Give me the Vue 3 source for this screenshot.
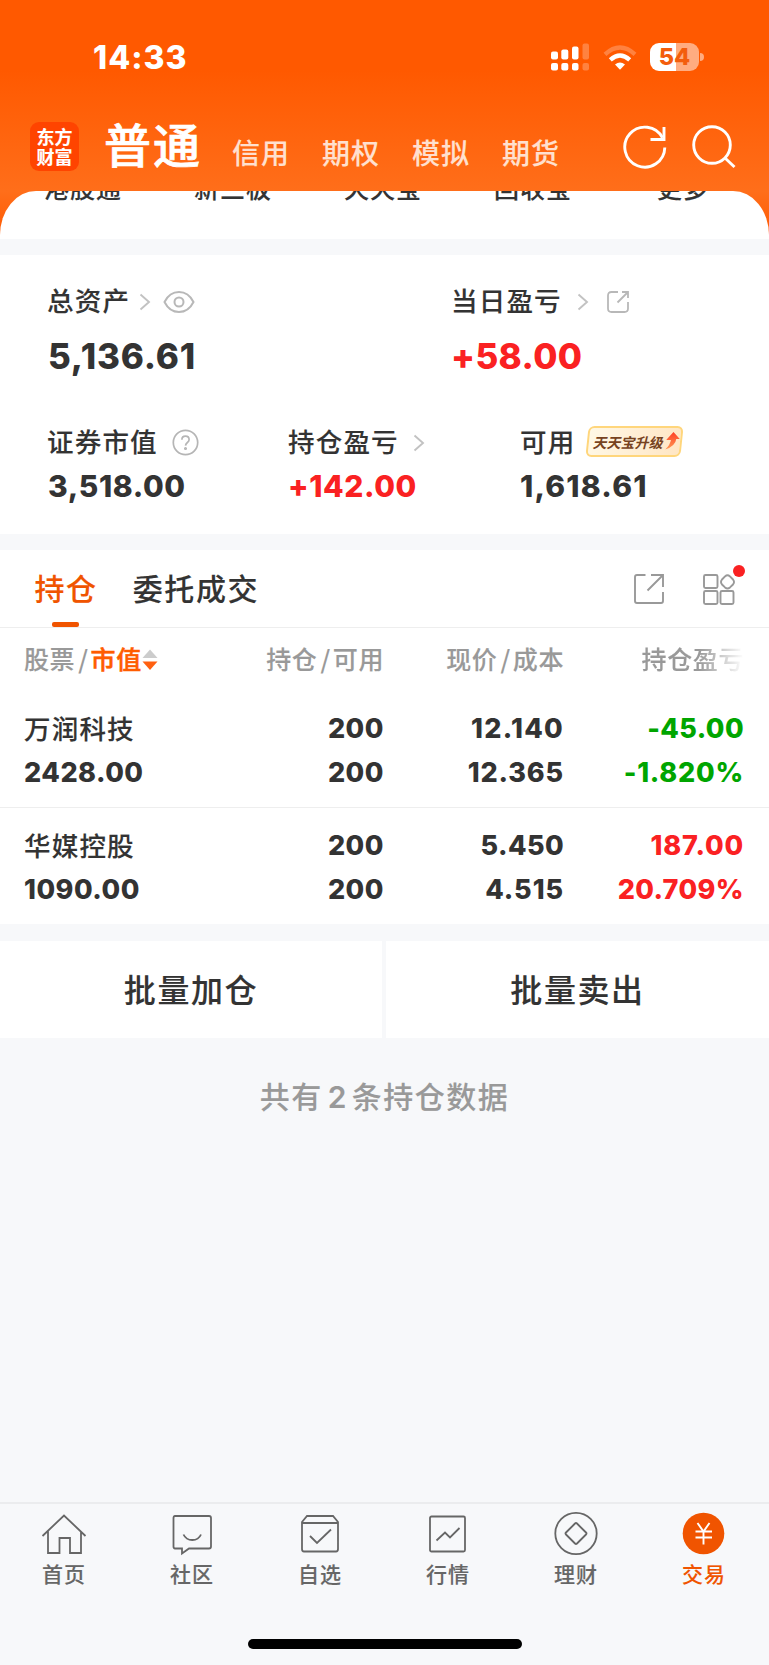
<script setup>
const markets = ['信用', '期权', '模拟', '期货']
const shortcuts = ['港股通', '新三板', '天天宝', '回收宝', '更多']
const holdings = [
  { name: '万润科技', value: '2428.00', held: '200', usable: '200', price: '12.140', cost: '12.365', profit: '-45.00', rate: '-1.820%', tone: 'down' },
  { name: '华媒控股', value: '1090.00', held: '200', usable: '200', price: '5.450', cost: '4.515', profit: '187.00', rate: '20.709%', tone: 'up' },
]
const tabs = [
  { id: 'home', label: '首页' },
  { id: 'community', label: '社区' },
  { id: 'watch', label: '自选' },
  { id: 'market', label: '行情' },
  { id: 'wealth', label: '理财' },
  { id: 'trade', label: '交易' },
]
// The digit 1 is narrow, so figures containing it are tracked a little wider.
function tracking(text) {
  const ones = text.split('1').length - 1
  return { letterSpacing: `${0.4 + (2.6 * ones) / text.length}px` }
}
</script>

<template>
  <div class="app">
    <header class="top">
      <div class="status">
        <span class="time num">14:33</span>
        <svg class="signal" width="39" height="28" viewBox="0 0 39 28">
          <g fill="#fff">
            <rect x="0" y="8.500" width="7" height="8" rx="2" /><rect x="10.300" y="6.500" width="7" height="10" rx="2" /><rect x="21" y="3.500" width="6.500" height="13" rx="2" />
            <rect x="0" y="20" width="7" height="7.500" rx="2" /><rect x="10.300" y="20" width="7" height="7.500" rx="2" /><rect x="21" y="20" width="6.500" height="7.500" rx="2" />
          </g>
          <g fill="#ff8240"><rect x="31.500" y="0.500" width="6.500" height="16" rx="2" /><rect x="31.500" y="20" width="6.500" height="7.500" rx="2" /></g>
        </svg>
        <svg class="wifi" width="34" height="26" viewBox="0 0 34 26" fill="none">
          <path d="M2 9.300Q17 -4.300 32 9.300" stroke="#ff8240" stroke-width="4.300" />
          <path d="M7.300 14.800Q17 6.200 26.700 14.800" stroke="#fff" stroke-width="4.400" />
          <path d="M12 19.600Q17 15.400 22 19.600L17 24.700Z" fill="#fff" />
        </svg>
        <div class="battery num"><span>54</span></div>
        <i class="nub"></i>
      </div>
      <nav class="nav">
        <div class="logo"><span>东方</span><span>财富</span></div>
        <h1>普通</h1>
        <span v-for="m in markets" :key="m" class="market">{{ m }}</span>
        <svg class="refresh" width="46" height="46" viewBox="0 0 46 46" fill="none" stroke="#fff" stroke-width="2.900">
          <path d="M42.800 23.500A20 20 0 1 1 40.500 13.800" /><path d="M42 3V15.500H28.500" />
        </svg>
        <svg class="search" width="46" height="46" viewBox="0 0 46 46" fill="none" stroke="#fff" stroke-width="2.900">
          <circle cx="21" cy="21" r="18.300" /><path d="M34 34L43.500 43" />
        </svg>
      </nav>
    </header>
    <section class="shortcuts"><div><span v-for="s in shortcuts" :key="s">{{ s }}</span></div></section>

    <section class="summary">
      <div class="pair">
        <div class="stat">
          <div class="label">总资产
            <svg class="chev c1" width="12" height="18" viewBox="0 0 12 18"><path d="M1.500 1.500L10 9L1.500 16.500" /></svg>
            <svg class="eye" width="32" height="24" viewBox="0 0 32 24" fill="none" stroke="#b8b8b8" stroke-width="2"><path d="M1.500 12C5 5 10 2 16 2S27 5 30.500 12C27 19 22 22 16 22S5 19 1.500 12Z" /><circle cx="16" cy="12" r="4.500" /></svg>
          </div>
          <div class="num big">5,136.61</div>
        </div>
        <div class="stat">
          <div class="label">当日盈亏
            <svg class="chev c2" width="12" height="18" viewBox="0 0 12 18"><path d="M1.500 1.500L10 9L1.500 16.500" /></svg>
            <svg class="share" width="24" height="24" viewBox="0 0 24 24" fill="none" stroke="#b8b8b8" stroke-width="1.800"><path d="M12 2H5.500Q2 2 2 5.500V18.500Q2 22 5.500 22H18.500Q22 22 22 18.500V12M16 2H22V8M22 2L11.500 12.500" /></svg>
          </div>
          <div class="num big up">+58.00</div>
        </div>
      </div>
      <div class="triple">
        <div class="stat">
          <div class="label">证券市值
            <svg class="help" width="27" height="27" viewBox="0 0 27 27" fill="none" stroke="#b5b5b5" stroke-width="1.700"><circle cx="13.500" cy="13.500" r="12.200" /><path d="M9.900 10.800Q9.900 7.200 13.500 7.200T17.100 10.600Q17.100 12.200 15.400 13.500T13.500 16.600" /><circle cx="13.500" cy="19.500" r=".7" /></svg>
          </div>
          <div class="num mid">3,518.00</div>
        </div>
        <div class="stat">
          <div class="label">持仓盈亏
            <svg class="chev c3" width="12" height="18" viewBox="0 0 12 18"><path d="M1.500 1.500L10 9L1.500 16.500" /></svg>
          </div>
          <div class="num mid up">+142.00</div>
        </div>
        <div class="stat">
          <div class="label">可用
            <div class="badge">
              <span>天天宝升级</span>
              <svg width="14" height="18" viewBox="0 0 14 18"><defs><linearGradient id="arrowFill" x1="0" y1="0" x2="0" y2="1"><stop offset="0" stop-color="#ff3f25" /><stop offset="1" stop-color="#ff9a55" /></linearGradient></defs><path fill="url(#arrowFill)" d="M6.500 0L13.500 7H10Q10 14 0 17.500Q4.500 13 4.800 8H0Z" /></svg>
            </div>
          </div>
          <div class="num mid wide">1,618.61</div>
        </div>
      </div>
    </section>

    <section class="positions">
      <div class="tabs">
        <span class="tab active">持仓</span>
        <span class="tab">委托成交</span>
        <svg class="export" width="32" height="32" viewBox="0 0 32 32" fill="none" stroke="#999" stroke-width="1.900"><path d="M12.500 2H4Q2 2 2 4V28Q2 30 4 30H28Q30 30 30 28V19M18 2H30V14M30 2L14.500 17.500" /></svg>
        <div class="grid-icon">
          <svg width="34" height="34" viewBox="0 0 34 34" fill="none" stroke="#999" stroke-width="1.900"><rect x="2" y="2" width="13.500" height="13" rx="1.500" /><rect x="2" y="18" width="13.500" height="13" rx="1.500" /><rect x="18.500" y="18" width="13" height="13" rx="1.500" /><path d="M23 3.400Q25.500 1.300 28 3.400L31 6.500Q33 9 31 11.500L28 14.400Q25.500 16.500 23 14.400L20 11.500Q18 9 20 6.500Z" /></svg>
          <i></i>
        </div>
      </div>
      <div class="row thead">
        <div class="first">股票<b>/</b><em>市值</em><svg width="16" height="22" viewBox="0 0 16 22"><path d="M.500 9L8 .500L15.500 9Z" fill="#ccc" /><path d="M.500 12.500L8 21L15.500 12.500Z" fill="#ff6010" /></svg></div>
        <div>持仓<b>/</b>可用</div>
        <div>现价<b>/</b>成本</div>
        <div class="fade">持仓盈亏</div>
      </div>
      <div v-for="h in holdings" :key="h.name" class="row holding">
        <div class="first"><span class="name">{{ h.name }}</span><span class="num">{{ h.value }}</span></div>
        <div class="num"><span>{{ h.held }}</span><span>{{ h.usable }}</span></div>
        <div class="num"><span :style="tracking(h.price)">{{ h.price }}</span><span :style="tracking(h.cost)">{{ h.cost }}</span></div>
        <div class="num" :class="h.tone"><span :style="tracking(h.profit)">{{ h.profit }}</span><span :style="tracking(h.rate)">{{ h.rate }}</span></div>
      </div>
    </section>

    <section class="batch"><button>批量加仓</button><button>批量卖出</button></section>
    <p class="count">共有<span>2</span>条持仓数据</p>

    <footer class="tabbar">
      <div class="items">
        <div v-for="t in tabs" :key="t.id" class="item" :class="{ current: t.id === 'trade' }">
          <svg width="48" height="46" viewBox="0 0 48 46" fill="none" stroke="#666" stroke-width="1.800">
            <template v-if="t.id === 'home'"><path d="M2.500 25L24 4.500L45.500 25M8 20.500V42H19.500V27H30V42H41V20.500" /></template>
            <template v-else-if="t.id === 'community'"><path d="M7 5H41Q43 5 43 7V35.500Q43 37.500 41 37.500H21L14 42.500V37.500H7Q5.500 37.500 5.500 35.500V7Q5.500 5 7 5Z" /><path d="M15.500 23.500Q18 29 24.300 29T33 23.500" /></template>
            <template v-else-if="t.id === 'watch'"><path d="M6 11L11 5H37L42 11V38Q42 40.500 40 40.500H8Q6 40.500 6 38ZM6 12H42M14 25L21 32L35 18.500" /></template>
            <template v-else-if="t.id === 'market'"><rect x="6" y="5.500" width="35" height="35" rx="1.500" /><path d="M12.500 29.500L21 21.500L26 26.500L35.500 17" /></template>
            <template v-else-if="t.id === 'wealth'"><circle cx="24" cy="22.500" r="20.700" /><path d="M23 12.500Q24 11.500 25 12.500L34 21.500Q35 22.500 34 23.500L25 32.500Q24 33.500 23 32.500L14 23.500Q13 22.500 14 21.500Z" /></template>
            <template v-else><circle cx="23.500" cy="22.500" r="20.800" fill="#f05400" stroke="none" /><path stroke="#fff" stroke-width="1.900" d="M17.500 12L23.500 20.500L29.500 12M15.500 20.500H32M15.500 26.500H32M23.500 20V33.500" /></template>
          </svg>
          <span>{{ t.label }}</span>
        </div>
      </div>
      <i class="home-bar"></i>
    </footer>
  </div>
</template>

<style>
body { margin: 0; background: #f7f8fa; }
</style>

<style scoped>
* { box-sizing: border-box; }
.app { width: 769px; height: 1665px; display: flex; flex-direction: column; overflow: hidden; background: #f7f8fa; color: #333; font-family: "Noto Sans CJK SC", sans-serif; font-weight: 500; -webkit-text-stroke: .12px currentColor; }
i, em, b { font-style: normal; font-weight: inherit; }
svg { flex: none; display: block; }
.num { font-family: Inter, sans-serif; font-weight: 800; -webkit-text-stroke: 0; }
.up { color: #fa2122; }
.down { color: #00a500; }

.top { flex: none; height: 191px; background: linear-gradient(#ff5900 0, #ff5900 70px, #ff6e1a 191px); color: #fff; }
.status { height: 100px; display: flex; align-items: flex-start; padding-top: 43px; }
.time { width: 458px; padding-left: 93px; font-size: 32px; line-height: 30px; letter-spacing: 1px; }
.signal { margin-left: 93px; }
.wifi { margin: 2px 0 0 13px; }
.battery { width: 49px; height: 28px; margin-left: 13px; border-radius: 9px; background: linear-gradient(90deg, #fff 54%, #ffac80 54%); color: #f35d0c; font-size: 23.500px; line-height: 28px; text-align: center; }
.nub { width: 4px; height: 8px; margin: 10px 0 0 1px; border-radius: 0 4px 4px 0; background: #ffac80; }
.nav { height: 91px; display: flex; align-items: flex-start; padding-left: 30px; }
.logo { width: 49px; height: 49px; margin-top: 22px; padding-top: 4px; border-radius: 9px; background: #ff4400; font-size: 18px; font-weight: 700; line-height: 20px; text-align: center; }
.logo span { display: block; }
h1 { width: 127px; margin: 16px 0 0; padding-left: 25px; font-size: 47px; line-height: 54px; letter-spacing: 2px; font-weight: 500; -webkit-text-stroke-width: .7px; white-space: nowrap; }
.market { width: 90px; margin-top: 35px; font-size: 28px; line-height: 34px; letter-spacing: 1px; color: #ffe0cf; white-space: nowrap; }
h1 + .market { margin-left: 26px; }
.refresh { margin: 24px 0 0 30px; }
.search { margin: 24px 0 0 23px; }

.shortcuts { flex: none; height: 48px; background: linear-gradient(#ff6e1a, #ff5900); }
.shortcuts div { height: 48px; display: grid; grid-template-columns: repeat(5, 150px); padding-left: 8px; border-radius: 36px 36px 0 0 / 44px 44px 0 0; background: #fff; overflow: hidden; }
.shortcuts span { margin-top: -23px; font-size: 25px; line-height: 38px; letter-spacing: 1px; text-align: center; }

.summary { flex: none; height: 279px; margin-top: 16px; padding: 27px 47px 0; background: #fff; }
.pair { height: 141px; display: grid; grid-template-columns: 404px 1fr; }
.triple { display: grid; grid-template-columns: 241px 232px 1fr; padding-left: 0; }
.label { display: flex; align-items: center; height: 36px; font-size: 26.500px; letter-spacing: 1.200px; line-height: 36px; white-space: nowrap; }
.chev { margin-top: 3px; fill: none; stroke: #c2c2c2; stroke-width: 1.900; }
.c1 { margin-left: 9px; }
.c2 { margin-left: 15px; }
.c3 { margin-left: 14px; }
.eye { margin: 3px 0 0 12px; }
.share { margin: 3px 0 0 17px; }
.help { margin: 3px 0 0 14px; }
.big { margin-top: 18px; padding-left: 1px; font-size: 35px; line-height: 40px; letter-spacing: .800px; }
.big.up { padding-left: 0; letter-spacing: .400px; }
.mid { margin-top: 9px; padding-left: 1px; font-size: 30px; line-height: 36px; letter-spacing: .600px; }
.mid.up { padding-left: 0; }
.mid.wide { padding-left: 0; letter-spacing: 1.200px; }
.badge { width: 95px; height: 31px; margin: 0 0 0 12px; padding-left: 5px; display: flex; align-items: center; border: 2px solid #ffd67c; border-radius: 6px; transform: skewX(-6deg); background: linear-gradient(100deg, #fff8e6, #ffe6c4); color: #77431f; font-size: 14px; font-weight: 700; letter-spacing: 0; -webkit-text-stroke: 0; }
.badge span { transform: skewX(-8deg); }
.badge svg { margin: -2px 0 0 2px; }

.positions { flex: none; height: 374px; margin-top: 16px; background: #fff; }
.tabs { display: flex; height: 78px; padding-left: 34.500px; border-bottom: 1px solid #eee; }
.tab { position: relative; margin-right: 35px; padding-top: 18px; font-size: 30px; line-height: 38px; letter-spacing: 1.600px; }
.active { color: #f05400; }
.active::after { content: ""; position: absolute; left: 17.500px; top: 72px; width: 27px; height: 5px; border-radius: 2px; background: #f05400; }
.export { margin: 23px 0 0 339px; }
.grid-icon { position: relative; margin: 23px 0 0 37px; }
.grid-icon i { position: absolute; left: 30.500px; top: -8px; width: 12px; height: 12px; border-radius: 50%; background: #fa2122; }
.row { display: grid; grid-template-columns: 180px 180px 180px 180px; padding-left: 24px; text-align: right; }
.row > .first { text-align: left; }
.thead { height: 62px; padding-top: 11px; font-size: 25px; line-height: 38px; letter-spacing: .600px; color: #999; white-space: nowrap; }
.thead b { margin: 0 2px 0 3px; }
.thead em { color: #ff5c00; -webkit-text-stroke-width: .5px; }
.first svg { display: inline-block; vertical-align: -2px; }
.fade { -webkit-mask-image: linear-gradient(90deg, #000 75%, transparent 100%); mask-image: linear-gradient(90deg, #000 75%, transparent 100%); }
.holding { height: 117px; padding-top: 16px; font-size: 27px; }
.holding span { display: block; height: 44px; line-height: 44px; letter-spacing: .500px; }
.holding .name { margin-top: -1px; height: 45px; font-size: 26.500px; letter-spacing: 1.200px; }
.holding:nth-child(3) { height: 118px; padding-top: 17px; border-bottom: 1px solid #eee; }

.batch { flex: none; display: grid; grid-template-columns: 382px 383px; gap: 4px; margin-top: 17px; height: 97px; }
button { padding: 0 0 4px; border: 0; background: #fff; font: inherit; font-size: 32px; letter-spacing: 1.600px; color: #333; }
.count { flex: none; margin: 38px 0 0; text-align: center; font-size: 30px; line-height: 38px; letter-spacing: 1.500px; color: #999; }
.count span { margin: 0 4px 0 5px; font-family: Inter, sans-serif; font-weight: 600; }

.tabbar { flex: none; height: 163px; margin-top: auto; border-top: 2px solid #ebecee; }
.items { display: grid; grid-template-columns: repeat(6, 128px); height: 135px; }
.item { display: flex; flex-direction: column; align-items: center; padding-top: 7px; font-size: 21px; line-height: 30px; letter-spacing: 1px; color: #666; }
.item span { margin-top: 1px; }
.item.current { color: #f05400; }
.home-bar { display: block; width: 274px; height: 10px; margin: 0 auto; border-radius: 5px; background: #000; }
</style>
